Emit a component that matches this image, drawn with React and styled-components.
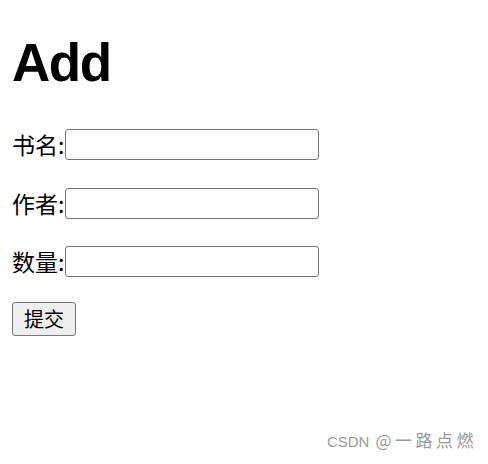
import React from "react";
import styled, { createGlobalStyle } from "styled-components";

const Global = createGlobalStyle`
  html, body { margin: 0; padding: 0; background: #fff; }
  body { font-family: "Liberation Sans", "Noto Sans CJK SC", sans-serif; color: #000; }
`;

const Page = styled.div`
  position: relative;
  width: 488px;
  height: 464px;
  padding: 36px 12px 0;
  box-sizing: border-box;
  overflow: hidden;
`;

const Title = styled.h1`
  margin: 0;
  font-family: "Liberation Sans", Arial, sans-serif;
  font-weight: 700;
  font-size: 53px;
  line-height: 54px;
  height: 54px;
  letter-spacing: -1.5px;
`;

const Form = styled.form`
  display: flex;
  flex-direction: column;
  align-items: flex-start;
  margin-top: 39px;
  gap: 27.5px;
`;

const Row = styled.div`
  display: flex;
  align-items: center;
  height: 31px;
`;

const Label = styled.label`
  font-family: "Noto Sans CJK SC", sans-serif;
  font-size: 23px;
  line-height: 31px;
`;

const Input = styled.input`
  box-sizing: border-box;
  width: 254px;
  height: 31px;
  margin: 0 0 0 1px;
  border: 1px solid #767676;
  border-radius: 3px;
  background: #fff;
  padding: 2px 3px;
  font-size: 18px;
`;

const Button = styled.button`
  box-sizing: border-box;
  margin-top: -2.5px;
  width: 64px;
  height: 34px;
  padding: 0;
  background: #efefef;
  border: 1px solid #767676;
  border-radius: 3px;
  font-family: "Noto Sans CJK SC", sans-serif;
  font-size: 20px;
  line-height: 32px;
  color: #000;
`;

const Watermark = styled.div`
  position: absolute;
  right: 11px;
  bottom: 12px;
  display: flex;
  align-items: baseline;
  font-family: "Liberation Sans", sans-serif;
  font-size: 15px;
  color: #9a9a9a;
`;

const Name = styled.span`
  font-family: "Noto Sans CJK SC", sans-serif;
  font-size: 17px;
  letter-spacing: 3.5px;
  margin-left: 6px;
`;

export default function App() {
  const fields = ["书名", "作者", "数量"];
  return (
    <>
      <Global />
      <Page>
        <Title>Add</Title>
        <Form onSubmit={(e) => e.preventDefault()}>
          {fields.map((f) => (
            <Row key={f}>
              <Label>{f}:</Label>
              <Input type="text" />
            </Row>
          ))}
          <Button type="submit">提交</Button>
        </Form>
        <Watermark>
          CSDN<Name>@一路点燃</Name>
        </Watermark>
      </Page>
    </>
  );
}
